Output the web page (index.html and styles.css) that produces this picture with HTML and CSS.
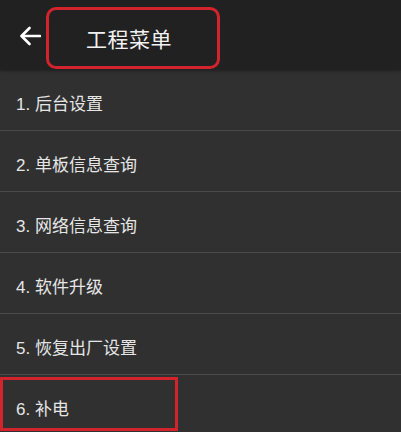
FILE: index.html
```html
<!DOCTYPE html>
<html lang="zh-CN">
<head>
    <meta charset="UTF-8">
    <meta name="viewport" content="width=device-width, initial-scale=1.0">
    <title>工程菜单</title>
    <link rel="stylesheet" href="styles.css">
</head>
<body>
    <header class="app-bar">
        <div class="back">
            <svg width="22" height="20" viewBox="0 0 22 20">
                <path d="M21 10H3M10.5 2L2.5 10l8 8" fill="none" stroke="#fff" stroke-width="2.6" stroke-linecap="round" stroke-linejoin="round"/>
            </svg>
        </div>
        <div class="title-box">
            <h1>工程菜单</h1>
        </div>
    </header>

    <div class="menu">
        <div class="menu-item">1. 后台设置</div>
        <div class="menu-item">2. 单板信息查询</div>
        <div class="menu-item">3. 网络信息查询</div>
        <div class="menu-item">4. 软件升级</div>
        <div class="menu-item">5. 恢复出厂设置</div>
        <div class="menu-item marked">
            6. 补电
            <span class="mark"></span>
        </div>
    </div>
</body>
</html>
```

FILE: styles.css
```css
* {
    margin: 0;
    padding: 0;
    box-sizing: border-box;
    font-family: "Liberation Sans", "Noto Sans CJK SC", sans-serif;
}
body {
    background-color: #303030;
    overflow: hidden;
}
.app-bar {
    display: flex;
    align-items: center;
    height: 70px;
    background-color: #212121;
    box-shadow: 0 1px 3px rgba(0,0,0,0.35);
    position: relative;
    z-index: 1;
}
.back {
    display: flex;
    width: 46px;
    padding-left: 19px;
    margin-top: 1px;
}
.title-box {
    display: flex;
    align-items: center;
    width: 174px;
    height: 62px;
    margin-top: 6px;
    padding-left: 37px;
    border: 3px solid #d3232c;
    border-radius: 10px;
}
.title-box h1 {
    font-size: 21px;
    font-weight: normal;
    color: #f2f2f2;
    letter-spacing: 0.5px;
}
.menu-item {
    display: flex;
    align-items: center;
    height: 61px;
    padding: 4px 0 0 16px;
    font-size: 17px;
    color: #e6e6e6;
    border-bottom: 1px solid #4a4a4a;
}
.marked {
    position: relative;
}
.mark {
    position: absolute;
    left: 0;
    top: 2px;
    width: 178px;
    height: 54px;
    border: 3px solid #d3232c;
}
```
